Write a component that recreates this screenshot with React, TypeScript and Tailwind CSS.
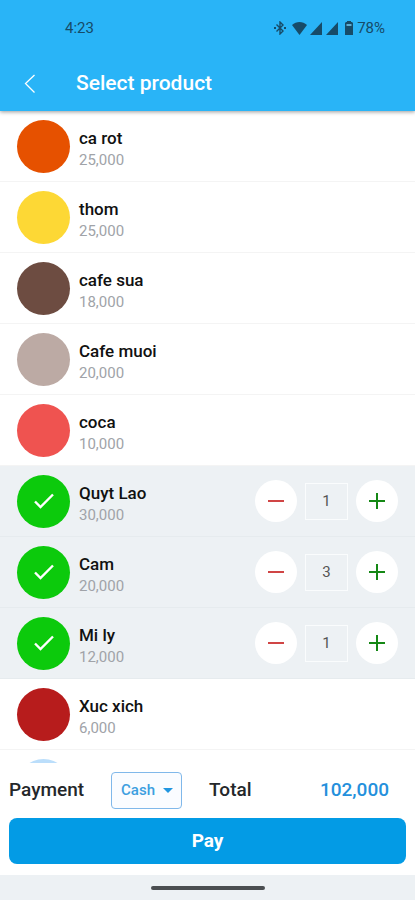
import { useState } from "react";

type Product = { name: string; price: number; color: string; quantity: number };

const initialProducts: Product[] = [
  { name: "ca rot", price: 25000, color: "bg-[#e65100]", quantity: 0 },
  { name: "thom", price: 25000, color: "bg-[#fdd835]", quantity: 0 },
  { name: "cafe sua", price: 18000, color: "bg-[#6d4c41]", quantity: 0 },
  { name: "Cafe muoi", price: 20000, color: "bg-[#bcaaa4]", quantity: 0 },
  { name: "coca", price: 10000, color: "bg-[#ef5350]", quantity: 0 },
  { name: "Quyt Lao", price: 30000, color: "bg-[#e65100]", quantity: 1 },
  { name: "Cam", price: 20000, color: "bg-[#fb8c00]", quantity: 3 },
  { name: "Mi ly", price: 12000, color: "bg-[#fdd835]", quantity: 1 },
  { name: "Xuc xich", price: 6000, color: "bg-[#b71c1c]", quantity: 0 },
  { name: "", price: 0, color: "bg-[#bbdefb]", quantity: 0 },
];

const format = (value: number) => value.toLocaleString("en-US");

function StatusBar() {
  return (
    <div className="flex h-14 items-center justify-between pl-[65px] pr-[30px] text-[#174b68]">
      <span className="text-[15px] leading-4">4:23</span>
      <div className="flex items-center">
        <svg width="12" height="14" viewBox="0 0 12 14" fill="none" stroke="currentColor" strokeWidth="1.4" aria-hidden="true">
          <path d="M2.500 3.500l6.500 6.500-3 3V1l3 3-6.500 6.500" />
          <path d="M0 7h2M10 7h2" strokeWidth="2" />
        </svg>
        <svg className="ml-1.5" width="15" height="13" viewBox="0 0 16 13" preserveAspectRatio="none" fill="currentColor" aria-hidden="true">
          <path d="M0 3C4.500-1 11.500-1 16 3L8 13z" />
        </svg>
        <svg className="ml-[3px]" width="28" height="13" viewBox="0 0 28 13" fill="currentColor" aria-hidden="true">
          <path d="M0 13L12 0v13zM16 13L28 0v13z" />
        </svg>
        <svg className="ml-[7px]" width="8" height="14" viewBox="0 0 8 14" fill="currentColor" aria-hidden="true">
          <path d="M2 0h4v1H2zM1 1h6l1 1v12H0V2z" />
          <path d="M1.500 3h5v2h-5z" fill="#5daed2" />
        </svg>
        <span className="ml-1 text-[15px] leading-4">78%</span>
      </div>
    </div>
  );
}

function Header() {
  return (
    <header className="z-10 shrink-0 bg-[#29b4f7] shadow-[0_1px_4px_rgba(0,0,0,0.4)]">
      <StatusBar />
      <div className="flex h-[55px] items-center pl-5">
        <button type="button" aria-label="Back" className="flex size-5 items-center justify-center text-white">
          <svg width="12" height="20" viewBox="0 0 12 20" fill="none" stroke="currentColor" strokeWidth="1.3" aria-hidden="true">
            <path d="M10.500 1L1.500 9.500l9 9" />
          </svg>
        </button>
        <h1 className="ml-9 text-[21px] font-medium text-white">Select product</h1>
      </div>
    </header>
  );
}

function Stepper({ product, onChange }: { product: Product; onChange: (quantity: number) => void }) {
  return (
    <div className="flex items-center gap-2">
      <button
        type="button"
        aria-label={`Remove one ${product.name}`}
        onClick={() => onChange(Math.max(0, product.quantity - 1))}
        className="flex size-[42px] items-center justify-center rounded-full bg-white text-[#d04545]"
      >
        <svg width="16" height="16" viewBox="0 0 16 16" stroke="currentColor" strokeWidth="2" aria-hidden="true">
          <path d="M0 8h16" />
        </svg>
      </button>
      <input
        type="text"
        inputMode="numeric"
        aria-label={`Quantity of ${product.name}`}
        value={product.quantity}
        onChange={(event) => onChange(Number(event.target.value) || 0)}
        className="h-[37px] w-[43px] border border-[#fafcfd] bg-transparent text-center text-[15px] text-[#555]"
      />
      <button
        type="button"
        aria-label={`Add one ${product.name}`}
        onClick={() => onChange(product.quantity + 1)}
        className="flex size-[42px] items-center justify-center rounded-full bg-white text-[#158815]"
      >
        <svg width="16" height="16" viewBox="0 0 16 16" stroke="currentColor" strokeWidth="2" aria-hidden="true">
          <path d="M0 8h16M8 0v16" />
        </svg>
      </button>
    </div>
  );
}

function ProductRow({ product, onChange }: { product: Product; onChange: (quantity: number) => void }) {
  const selected = product.quantity > 0;
  return (
    <li
      className={`flex h-[71px] items-center border-b px-[17px] ${
        selected ? "border-[#e6ebee] bg-[#edf1f4]" : "border-[#f4f4f4] bg-white"
      }`}
    >
      <div className={`flex size-[53px] items-center justify-center rounded-full ${selected ? "bg-[#0cca0c]" : product.color}`}>
        {selected && (
          <svg width="20" height="16" viewBox="0 0 20 16" fill="none" stroke="white" strokeWidth="2.400" aria-hidden="true">
            <path d="M1 8.500l5.500 5.500L19 1.500" />
          </svg>
        )}
      </div>
      {product.name && (
        <div className="ml-[9px] flex-1 pt-[3px]">
          <p className="text-[17px] leading-6 font-medium text-[#111]">{product.name}</p>
          <p className="text-[15px] leading-5 text-[#a0a3a8]">{format(product.price)}</p>
        </div>
      )}
      {selected && <Stepper product={product} onChange={onChange} />}
    </li>
  );
}

export default function App() {
  const [products, setProducts] = useState(initialProducts);
  const [payment, setPayment] = useState("Cash");
  const total = products.reduce((sum, product) => sum + product.price * product.quantity, 0);

  const setQuantity = (index: number, quantity: number) =>
    setProducts((current) => current.map((product, i) => (i === index ? { ...product, quantity } : product)));

  return (
    <div className="flex h-screen flex-col bg-white font-[Roboto,sans-serif]">
      <Header />
      <ul className="min-h-0 flex-1 overflow-hidden">
        {products.map((product, index) => (
          <ProductRow key={index} product={product} onChange={(quantity) => setQuantity(index, quantity)} />
        ))}
      </ul>
      <footer className="shrink-0 bg-white px-[9px] pb-[11px]">
        <div className="flex h-[55px] items-center text-[19px] font-medium text-[#24272a]">
          <label htmlFor="payment">Payment</label>
          <div className="relative ml-[27px]">
            <select
              id="payment"
              value={payment}
              onChange={(event) => setPayment(event.target.value)}
              className="block h-[37px] w-[71px] appearance-none rounded-sm border border-[#80b8ea] bg-[#fafcff] pl-[9px] text-[15px] font-medium text-[#3d9fe0]"
            >
              <option>Cash</option>
              <option>Card</option>
            </select>
            <svg
              className="pointer-events-none absolute top-4 right-[9px]"
              width="10"
              height="5"
              viewBox="0 0 10 5"
              fill="#2196e0"
              aria-hidden="true"
            >
              <path d="M0 0h10L5 5z" />
            </svg>
          </div>
          <span className="ml-[27px]">Total</span>
          <output className="ml-auto pr-[17px] text-[#2490dc]">{format(total)}</output>
        </div>
        <button type="button" className="h-[46px] w-full rounded-lg bg-[#039be5] text-[19px] font-bold text-white">
          Pay
        </button>
      </footer>
      <div className="flex h-[25px] shrink-0 items-center justify-center bg-[#edf1f4]">
        <div className="h-1 w-[114px] rounded-full bg-[#4b4e51]" />
      </div>
    </div>
  );
}
